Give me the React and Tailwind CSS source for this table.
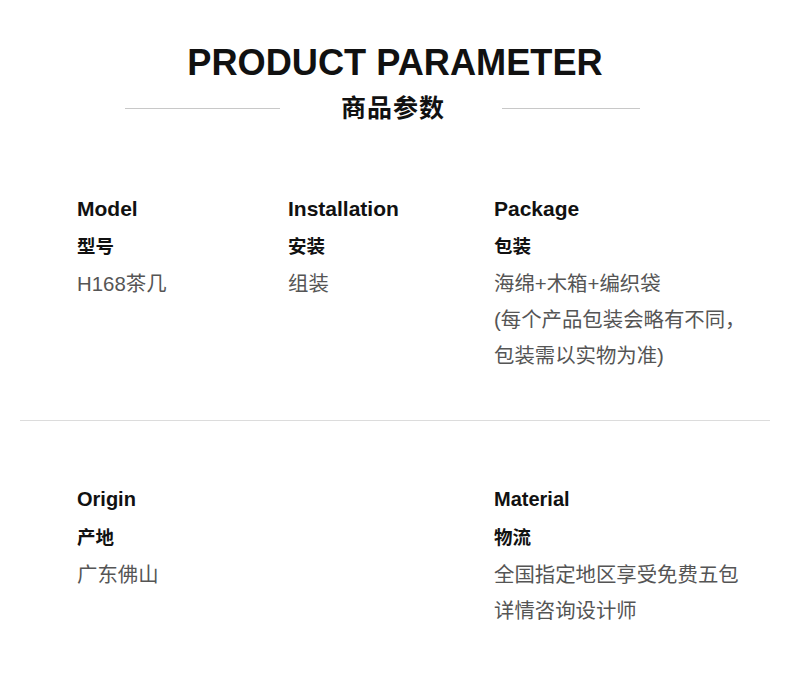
const font = { fontFamily: '"Liberation Sans", "Noto Sans CJK SC", sans-serif' };

function Param({ en, zh, values, enSize = "text-[21px]" }) {
  return (
    <div>
      <div className={`${enSize} leading-[37px] font-bold text-[#111]`}>{en}</div>
      <div className="text-[18.5px] leading-[39px] font-bold text-[#111]">{zh}</div>
      {values.map((v) => (
        <div key={v} className="text-[20.4px] leading-[36px] text-[#555] whitespace-nowrap">
          {v}
        </div>
      ))}
    </div>
  );
}

export default function App() {
  return (
    <div className="w-[790px] h-[680px] bg-white overflow-hidden" style={font}>
      {/* Heading */}
      <div className="pt-[45px]">
        <h1 className="text-[36.2px] leading-[36px] font-bold text-center text-[#111]">
          PRODUCT PARAMETER
        </h1>
        <div className="flex items-center pl-[125px] mt-[12px] h-[30px]">
          <div className="w-[155px] h-px bg-[#c8c8c8]" />
          <div className="ml-[61px] mr-[57px] text-[25px] leading-[30px] font-bold text-[#111] tracking-[1px]">
            商品参数
          </div>
          <div className="w-[138px] h-px bg-[#c8c8c8]" />
        </div>
      </div>

      {/* Row one */}
      <div className="grid grid-cols-[211px_206px_1fr] pl-[77px] mt-[67px]">
        <Param en="Model" zh="型号" values={["H168茶几"]} />
        <Param en="Installation" zh="安装" values={["组装"]} />
        <Param
          en="Package"
          zh="包装"
          values={["海绵+木箱+编织袋", "(每个产品包装会略有不同，", "包装需以实物为准)"]}
        />
      </div>

      <div className="mx-[20px] mt-[46px] h-px bg-[#dcdcdc]" />

      {/* Row two */}
      <div className="grid grid-cols-[417px_1fr] pl-[77px] mt-[60px]">
        <Param en="Origin" zh="产地" values={["广东佛山"]} enSize="text-[20px]" />
        <Param
          en="Material"
          zh="物流"
          values={["全国指定地区享受免费五包", "详情咨询设计师"]}
          enSize="text-[20px]"
        />
      </div>
    </div>
  );
}
